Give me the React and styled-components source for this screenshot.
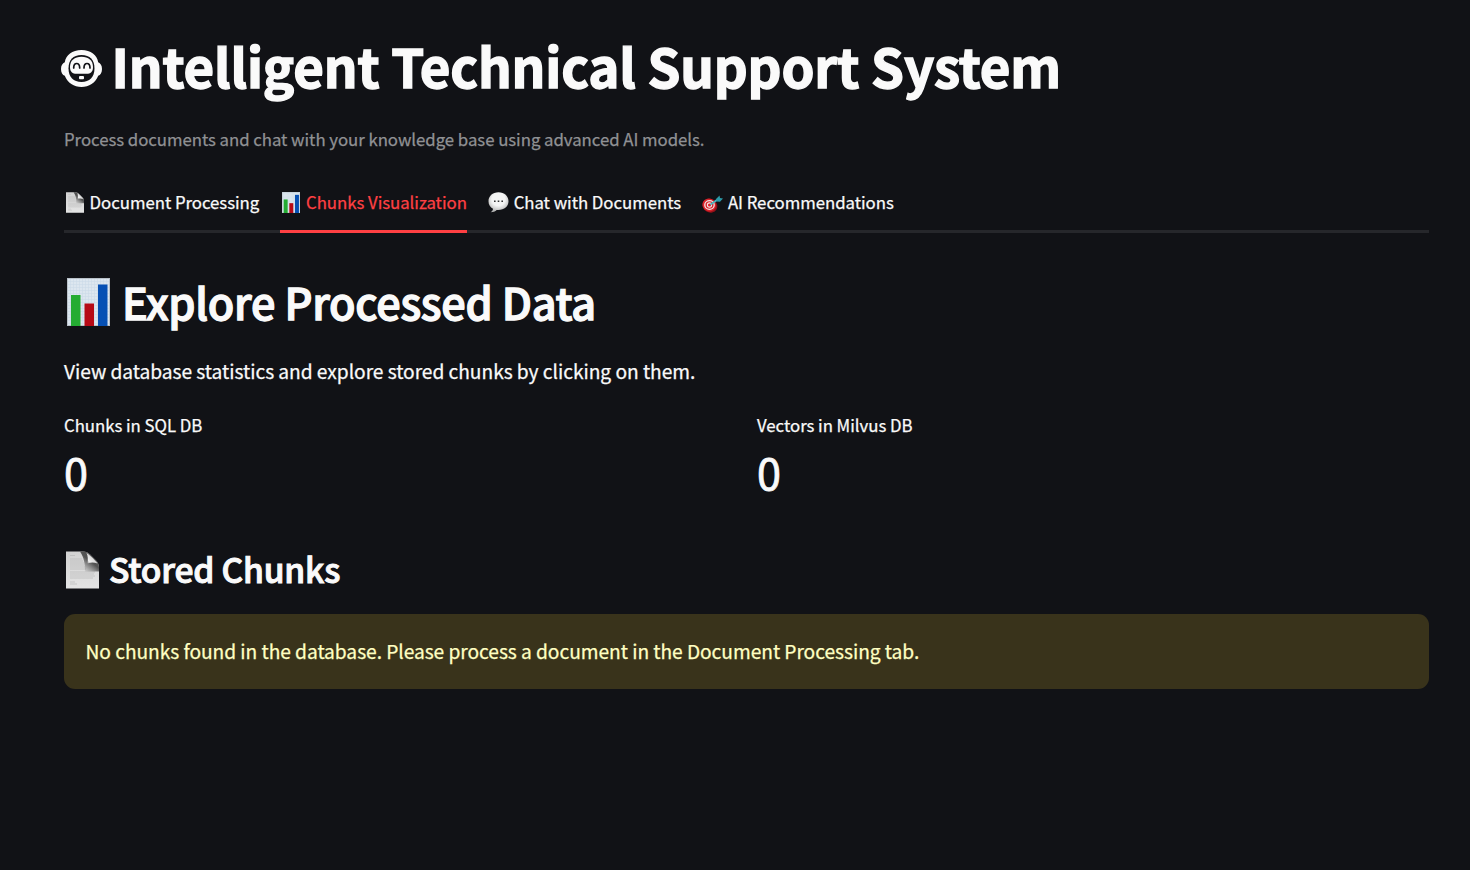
import React from 'react';
import styled, { createGlobalStyle } from 'styled-components';

const GlobalStyle = createGlobalStyle`
  * { box-sizing: border-box; }
  body {
    margin: 0;
    background: #111216;
    color: #fafafa;
    font-family: "Noto Sans CJK SC", "Noto Sans", sans-serif;
    -webkit-text-stroke: 0.25px;
  }
  h1, h2, h3, p { margin: 0; }
`;

const Page = styled.main`
  min-height: 870px;
  padding: 33px 41px 0 64px;
`;

const Heading = styled.div`
  display: flex;
  align-items: center;
  white-space: nowrap;
`;

const Title = styled(Heading)`
  height: 64px;
  gap: 9.5px;
  margin-left: -3px;
  font-size: 52.8px;
  font-weight: 700;
  line-height: 64px;
  letter-spacing: -0.16px;
  -webkit-text-stroke: 1.4px;

  svg { margin-top: 6px; }
`;

const Section = styled(Heading)`
  height: 58px;
  margin-top: 39px;
  gap: 12px;
  padding-left: 3px;
  font-size: 43.2px;
  font-weight: 500;
  line-height: 58px;
  letter-spacing: -0.3px;
  -webkit-text-stroke: 1.3px;

  svg { margin-top: 2px; }
`;

const Subsection = styled(Heading)`
  height: 46px;
  margin-top: 45px;
  gap: 10px;
  padding-left: 2px;
  font-size: 33.6px;
  font-weight: 500;
  line-height: 46px;
  letter-spacing: -0.2px;
  -webkit-text-stroke: 1px;

  svg { margin-top: 1px; }
`;

const Caption = styled.p`
  height: 30px;
  margin-top: 27px;
  font-size: 16.8px;
  line-height: 30px;
  letter-spacing: -0.035px;
  color: #909194;
  white-space: nowrap;
`;

const Tabs = styled.nav`
  display: flex;
  gap: 21.2px;
  height: 54px;
  margin-top: 25px;
  box-shadow: inset 0 -3px #26272b;
`;

const Tab = styled.button`
  display: flex;
  align-items: center;
  gap: 4.3px;
  height: 54px;
  padding: 0 0 6px;
  border: 0;
  border-bottom: 3px solid ${(p) => (p.$active ? '#ff4043' : 'transparent')};
  background: none;
  color: ${(p) => (p.$active ? '#ff4043' : '#fafafa')};
  font: 400 16.8px "Noto Sans CJK SC", sans-serif;
  letter-spacing: -0.03px;
  white-space: nowrap;
`;

const TabIcon = styled.span`
  display: flex;
  justify-content: center;
  width: 21.3px;
  padding-top: ${(p) => p.$drop ?? 2}px;
`;

const Body = styled.p`
  height: 34px;
  margin-top: 24px;
  font-size: 19.2px;
  line-height: 34px;
  letter-spacing: -0.045px;
  white-space: nowrap;
`;

const Metrics = styled.div`
  display: grid;
  grid-template-columns: 1fr 1fr;
  gap: 21px;
  margin-top: 23px;
`;

const MetricLabel = styled.div`
  height: 28px;
  font-size: 16.8px;
  line-height: 28px;
  letter-spacing: -0.03px;
`;

const MetricValue = styled.div`
  height: 60px;
  margin-top: 2px;
  font-size: 43.2px;
  line-height: 60px;
  -webkit-text-stroke: 0.8px;
`;

const Alert = styled.div`
  height: 75px;
  margin-top: 22px;
  padding: 0 21.5px;
  border-radius: 11px;
  background: #39331b;
  color: #ffffc2;
  font-size: 19.2px;
  line-height: 75px;
  letter-spacing: -0.05px;
  white-space: nowrap;
`;

const Icon = styled.svg`
  display: block;
  flex: none;
`;

const Robot = () => (
  <Icon width="41" height="37" viewBox="0 0 41 37">
    <path fill="#fafafa" d="M20.500 0C11 0 5 5 3.800 12.200C1.500 13 0 15.500 0 19s1.500 6 3.800 6.800C6.500 33 13 37 20.500 37s14-4 16.700-11.200C39.500 25 41 22.500 41 19s-1.500-6-3.800-6.800C36 5 30 0 20.500 0Z" />
    <path fill="#111216" d="M20.500 5C12 5 7.500 10 7.500 18.500S12.500 32 20.500 32s13-5 13-13.500S29 5 20.500 5Z" />
    <path fill="#fafafa" d="M20.500 6.800C13.500 6.800 9 10.500 9 17c0 5 2.500 6.800 6.500 6.800h10c4 0 6.500-1.800 6.500-6.800 0-6.500-4.500-10.200-11.500-10.200Z" />
    <path fill="none" stroke="#111216" strokeWidth="1.700" strokeLinecap="round" d="M12.700 18c0-6 6-6 6 0M23 18c0-6 6-6 6 0" />
    <rect x="18" y="26" width="5" height="3.300" rx="1" fill="#fafafa" />
  </Icon>
);

const Chart = ({ width, height }) => (
  <Icon width={width} height={height} viewBox="0 0 43 48" preserveAspectRatio="none">
    <defs>
      <pattern id="grid" width="3" height="3" patternUnits="userSpaceOnUse">
        <rect width="3" height="3" fill="#dce6ef" />
        <path d="M0 .5h3M.5 0v3" stroke="#cbdae7" strokeWidth=".6" />
      </pattern>
    </defs>
    <rect width="43" height="48" fill="url(#grid)" />
    <rect x=".5" y=".5" width="42" height="47" fill="none" stroke="#b9c1c9" />
    <rect x="4" y="17" width="9.500" height="31" fill="#24ac32" />
    <rect x="17.500" y="25.500" width="9.500" height="22.500" fill="#b60a16" />
    <rect x="31" y="6.500" width="9.500" height="41.500" fill="#0650b4" />
  </Icon>
);

const Document = ({ width, height }) => (
  <Icon width={width} height={height} viewBox="0 0 33 38" preserveAspectRatio="none">
    <defs>
      <linearGradient id="paper" x1="0" y1="0" x2="0" y2="1">
        <stop offset="0" stopColor="#d2d2d2" />
        <stop offset="1" stopColor="#e4e4e4" />
      </linearGradient>
      <linearGradient id="shade" gradientUnits="userSpaceOnUse" x1="16" y1="20" x2="24" y2="10">
        <stop offset="0" stopColor="#666" stopOpacity="0" />
        <stop offset="1" stopColor="#444" stopOpacity=".9" />
      </linearGradient>
      <linearGradient id="fold" gradientUnits="userSpaceOnUse" x1="20" y1="13" x2="26" y2="7">
        <stop offset="0" stopColor="#777" />
        <stop offset=".5" stopColor="#f0f0f0" />
        <stop offset="1" stopColor="#dcdcdc" />
      </linearGradient>
    </defs>
    <path d="M0 .5h17c3 0 5 1 7 3l6 6c2 2 3 4 3 7v21H0Z" fill="url(#paper)" />
    <path d="M4 4.500h5M4 8h12M4 10h13M4 12h14M4 14h14M4 16h15M4 18h16M4 21h25M4 23h24M4 25h25M4 27h23M4 31h5M4 33h7" stroke="#b2b2b2" strokeWidth=".6" />
    <path d="M14 .5h3c3 0 5 1 7 3l6 6c2 2 3 4 3 7v4H19c0-8-1-14-5-20Z" fill="url(#shade)" />
    <path d="M20.500 2c1.500 3 1.500 6 1 10.500 4-1.500 7-1 10 0-1-2-8-9-11-10.500Z" fill="url(#fold)" />
  </Icon>
);

const Bubble = () => (
  <Icon width="21" height="21" viewBox="0 0 21 21">
    <defs>
      <radialGradient id="bubble" cx=".5" cy=".35" r=".65">
        <stop offset=".5" stopColor="#f5f5f5" />
        <stop offset="1" stopColor="#b0b0b0" />
      </radialGradient>
    </defs>
    <path d="M10.500 .3C4.500 .3.500 4.300.500 9.200c0 3.500 1.800 6 4.500 7.600 0 1.500-1 2.500-2.300 3.400 2.500 0 4.500-1 6-2.300 7.300.6 11.800-3.500 11.800-8.700 0-4.900-4-8.900-10-8.900Z" fill="url(#bubble)" />
    <path d="M6 9.300h1.600M9.700 9.300h1.600M13.400 9.300h1.600" stroke="#333" strokeWidth="1.600" />
  </Icon>
);

const Target = () => (
  <Icon width="21" height="18" viewBox="0 0 21 18">
    <ellipse cx="8" cy="10.700" rx="7.500" ry="6.800" fill="#941018" transform="rotate(30 8 10.700)" />
    <ellipse cx="7.200" cy="10" rx="6.900" ry="6.300" fill="#d8232b" transform="rotate(30 7.200 10)" />
    <ellipse cx="7.500" cy="10" rx="4.700" ry="4.300" fill="none" stroke="#f4e4e4" strokeWidth="1.300" />
    <circle cx="7.500" cy="10" r="2.100" fill="none" stroke="#f4e4e4" strokeWidth="1.100" />
    <path d="m8.500 9.500 7.500-5.300" stroke="#46b7bf" strokeWidth="1.800" />
    <path d="m14 4 3.500-3.500.5 2.500 3 .5-3 3.200-3.500-.2Z" fill="#2c9aa8" />
  </Icon>
);

export default function App() {
  return (
    <>
      <GlobalStyle />
      <Page>
        <Title as="h1"><Robot /><span>Intelligent Technical Support System</span></Title>
        <Caption>Process documents and chat with your knowledge base using advanced AI models.</Caption>
        <Tabs>
          <Tab><TabIcon><Document width={18} height={21} /></TabIcon><span>Document Processing</span></Tab>
          <Tab $active><TabIcon><Chart width={18} height={21} /></TabIcon><span>Chunks Visualization</span></Tab>
          <Tab><TabIcon><Bubble /></TabIcon><span>Chat with Documents</span></Tab>
          <Tab><TabIcon $drop={4}><Target /></TabIcon><span>AI Recommendations</span></Tab>
        </Tabs>
        <Section as="h2"><Chart width={43} height={48} /><span>Explore Processed Data</span></Section>
        <Body>View database statistics and explore stored chunks by clicking on them.</Body>
        <Metrics>
          <div><MetricLabel>Chunks in SQL DB</MetricLabel><MetricValue>0</MetricValue></div>
          <div><MetricLabel>Vectors in Milvus DB</MetricLabel><MetricValue>0</MetricValue></div>
        </Metrics>
        <Subsection as="h3"><Document width={33} height={38} /><span>Stored Chunks</span></Subsection>
        <Alert>No chunks found in the database. Please process a document in the Document Processing tab.</Alert>
      </Page>
    </>
  );
}
